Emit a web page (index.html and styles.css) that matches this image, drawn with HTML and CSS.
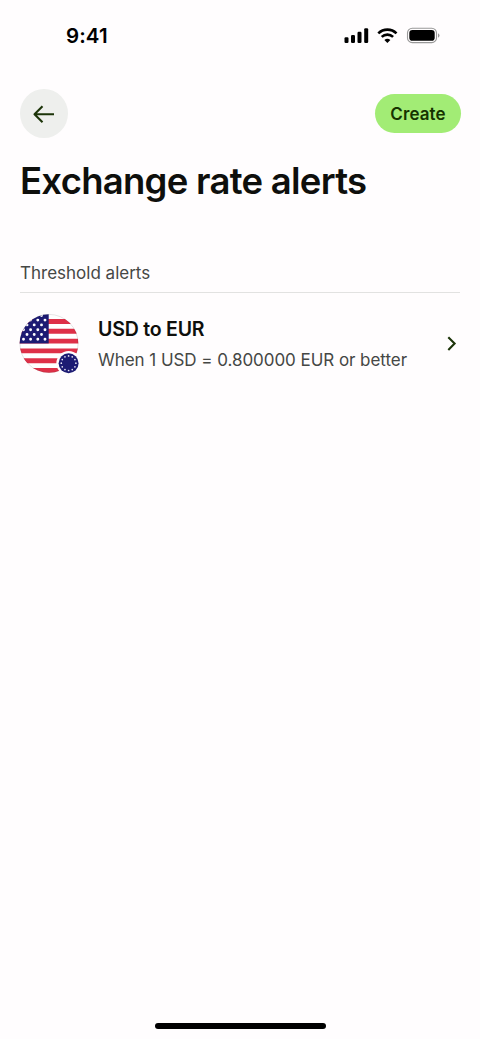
FILE: index.html
```html
<!DOCTYPE html>
<html lang="en">
<head>
<meta charset="utf-8">
<title>Exchange rate alerts</title>
<link rel="stylesheet" href="styles.css">
</head>
<body>
<div class="screen">
  <header class="status">
    <span class="time">9:41</span>
    <svg class="status-icons" width="98" height="20" viewBox="0 0 98 20">
      <rect x="1.5" y="12.3" width="4" height="5.7" rx="1.2"/>
      <rect x="8" y="10" width="4" height="8" rx="1.2"/>
      <rect x="14.5" y="6.7" width="4" height="11.3" rx="1.2"/>
      <rect x="21.2" y="3.2" width="4" height="14.8" rx="1.2"/>
      <g class="wifi">
        <path d="M35.3 8.4C40.4 3.4 48.4 3.4 53.5 8.4"/>
        <path d="M38.7 11.9C41.9 8.9 46.9 8.9 50.1 11.9"/>
      </g>
      <path d="M44.4 18l-3-3.1q3-2.4 6 0z"/>
      <rect class="battery" x="64.5" y="3.2" width="29" height="14.4" rx="4.7"/>
      <rect x="66.3" y="5" width="25.4" height="10.8" rx="3.1"/>
      <path class="tip" d="M95 8.2v4.6q1.5-.8 1.5-2.3T95 8.2z"/>
    </svg>
  </header>
  <nav class="nav">
    <button class="back" aria-label="Back">
      <svg width="24" height="24" viewBox="0 0 24 24"><path d="M22 12.3H2.5M10.5 4.3l-8 8 8 8"/></svg>
    </button>
    <button class="create">Create</button>
  </nav>
  <main>
    <h1>Exchange rate alerts</h1>
    <h2>Threshold alerts</h2>
    <a class="alert">
      <svg class="flag" width="62" height="62" viewBox="0 0 62 62">
        <defs>
          <clipPath id="disc"><circle cx="30" cy="30.5" r="29.3"/></clipPath>
        </defs>
        <g clip-path="url(#disc)">
          <rect width="62" height="62" fill="#fff"/>
          <path class="stripes" d="M0 8.5h62M0 18.3h62M0 28.1h62M0 37.9h62M0 47.7h62M0 57.5h62"/>
          <rect width="29.7" height="30.4" fill="#1d1b73"/>
          <path class="stars" d="M22.5 2.6h0M18.8 7.1h0M26 7.1h0M11.6 7.1h0M8 11.9h0M15.2 11.9h0M22.5 11.9h0M4.5 16.7h0M11.6 16.7h0M18.8 16.7h0M26 16.7h0M8 21.5h0M15.2 21.5h0M22.5 21.5h0M4.5 26.3h0M11.6 26.3h0M18.8 26.3h0M26 26.3h0"/>
        </g>
        <circle class="edge" cx="30" cy="30.5" r="29.1"/>
        <circle cx="49.6" cy="50.2" r="12.2" fill="#fffdfe"/>
        <circle cx="49.6" cy="50.2" r="10" fill="#1d1b73"/>
        <circle class="ring" cx="49.6" cy="50.2" r="7.3" pathLength="120"/>
      </svg>
      <span class="copy">
        <strong>USD to EUR</strong>
        <span class="rule">When 1 USD = 0.800000 EUR or better</span>
      </span>
      <svg class="chevron" width="12" height="16" viewBox="0 0 12 16"><path d="M2.3 1.3L8.6 7.6l-6.3 6.3"/></svg>
    </a>
  </main>
  <div class="home"></div>
</div>
</body>
</html>
```
FILE: styles.css
```css
* { box-sizing: border-box; }
body { margin: 0; background: #fffdfe; font-family: Inter, "Liberation Sans", sans-serif; }
.screen { width: 480px; height: 1039px; display: flex; flex-direction: column; color: #0e0f0c; }
.status { height: 89px; padding: 25px 39px 0 66px; display: flex; justify-content: space-between; align-items: flex-start; color: #000; }
.time { font-size: 20.5px; line-height: 22px; font-weight: 600; letter-spacing: 0.1px; }
.status-icons { display: block; }
.wifi path { fill: none; stroke: #000; stroke-width: 2.6; }
.battery { fill: none; stroke: #999; stroke-width: 1.1; }
.tip { fill: #999; }
.nav { height: 49px; padding: 0 19px 0 20px; display: flex; align-items: center; justify-content: space-between; }
button { border: 0; padding: 0; font: inherit; }
.back { width: 48px; height: 49px; border-radius: 50%; background: #eeefed; display: flex; align-items: center; justify-content: center; }
.back path, .chevron path { fill: none; stroke: #1c3409; stroke-width: 2.1; }
.back path { stroke-linejoin: round; }
.create { width: 86px; height: 39px; border-radius: 20px; background: #a2ec75; color: #163300; font-size: 17px; font-weight: 600; letter-spacing: 0.1px; }
main { padding: 20px 20px 0; flex: 1; }
h1 { margin: 0; height: 102px; font-size: 36.5px; line-height: 46px; font-weight: 600; letter-spacing: -0.73px; white-space: nowrap; }
h2 { margin: 0; height: 33px; border-bottom: 1px solid #e2e2e1; font-size: 17px; line-height: 27px; font-weight: 400; color: #454745; }
.alert { display: flex; align-items: center; height: 101px; }
.flag { flex: none; margin-left: -1px; }
.stripes { stroke: #de3048; stroke-width: 4.9; }
.stars { stroke: #fff; stroke-width: 2.9; stroke-linecap: round; }
.edge { fill: none; stroke: #000; stroke-opacity: .15; stroke-width: .7; }
.ring { fill: none; stroke: #e8e5f4; stroke-width: 1.7; stroke-linecap: round; stroke-dasharray: 0 10; }
.copy { margin-left: 17px; padding-top: 2px; flex: 1; display: flex; flex-direction: column; gap: 4px; white-space: nowrap; }
strong { font-size: 19.5px; line-height: 28px; font-weight: 600; letter-spacing: -0.2px; }
.rule { font-size: 17px; line-height: 27px; letter-spacing: -0.05px; color: #454745; }
.chevron { margin-right: 2px; }
.home { width: 171px; height: 6px; margin: 0 auto 10px; border-radius: 3px; background: #000; }
```
